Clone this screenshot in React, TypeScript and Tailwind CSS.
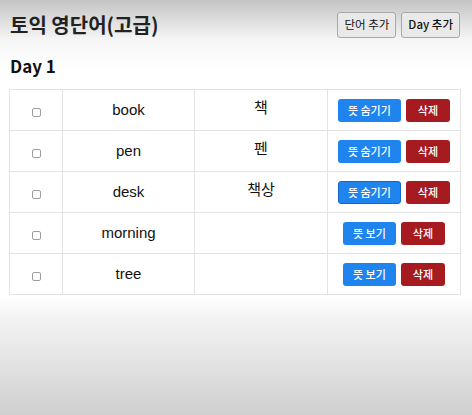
const words = [
  { id: 1, eng: 'book', kor: '책', show: true },
  { id: 2, eng: 'pen', kor: '펜', show: true },
  { id: 3, eng: 'desk', kor: '책상', show: true },
  { id: 4, eng: 'morning', kor: '아침', show: false },
  { id: 5, eng: 'tree', kor: '나무', show: false },
];

const font = { fontFamily: '"Noto Sans CJK KR", "Noto Sans", sans-serif' };

export default function App() {
  return (
    <div
      className="h-[415px] w-[472px] overflow-hidden bg-[linear-gradient(to_bottom,#c4c4c4_0px,#f6f6f6_40px,#ffffff_70px,#ffffff_295px,#f2f2f2_322px,#cfcfcf_415px)] text-[#111]"
      style={font}
    >
      <div className="flex items-center justify-between pl-[10px] pr-[12px] pt-[12px]">
        <h1 className="text-[20px] font-bold leading-[26px] text-[#222]">토익 영단어(고급)</h1>
        <div className="flex gap-[5px]">
          <button className="h-[26px] rounded-[3px] border border-[#a8a8a8] bg-[#e9e9e9] px-[6px] text-[11.5px] text-[#111]">
            단어 추가
          </button>
          <button className="h-[26px] rounded-[3px] border border-[#a8a8a8] bg-[#e9e9e9] px-[6px] text-[11.5px] font-medium text-[#111]">
            Day 추가
          </button>
        </div>
      </div>

      <h2 className="mt-[17px] pl-[10px] text-[17px] font-bold leading-[22px]">Day 1</h2>

      <table className="ml-[9px] mt-[12px] w-[451px] table-fixed border-collapse bg-white">
        <colgroup>
          <col className="w-[53px]" />
          <col className="w-[132px]" />
          <col className="w-[133px]" />
          <col className="w-[133px]" />
        </colgroup>
        <tbody>
          {words.map((w) => (
            <tr key={w.id} className="h-[41px]">
              <td className="border border-[#e3e3e3] text-center">
                <span className="inline-block h-[9px] w-[9px] rounded-[2px] border border-[#9e9e9e] bg-white align-middle" />
              </td>
              <td
                className="border border-[#e3e3e3] text-center text-[15px] text-[#111]"
                style={{ fontFamily: '"Liberation Sans", "Noto Sans CJK KR", sans-serif' }}
              >
                {w.eng}
              </td>
              <td className="border border-[#e3e3e3] pb-[5px] text-center text-[15px] text-[#111]">
                {w.show ? w.kor : ''}
              </td>
              <td className="border border-[#e3e3e3]">
                <div className="flex items-center justify-center gap-[5px]">
                  <button
                    className={
                      w.id === 3
                        ? 'h-[23px] rounded-[3px] border border-[#1666c7] bg-[#1f84ee] px-[9px] text-[11px] font-medium text-white'
                        : 'h-[23px] rounded-[3px] bg-[#1f84ee] px-[10px] text-[11px] font-medium text-white'
                    }
                  >
                    {w.show ? '뜻 숨기기' : '뜻 보기'}
                  </button>
                  <button className="h-[23px] rounded-[3px] bg-[#a51b20] px-[12px] text-[11px] font-medium text-white">
                    삭제
                  </button>
                </div>
              </td>
            </tr>
          ))}
        </tbody>
      </table>
    </div>
  );
}
